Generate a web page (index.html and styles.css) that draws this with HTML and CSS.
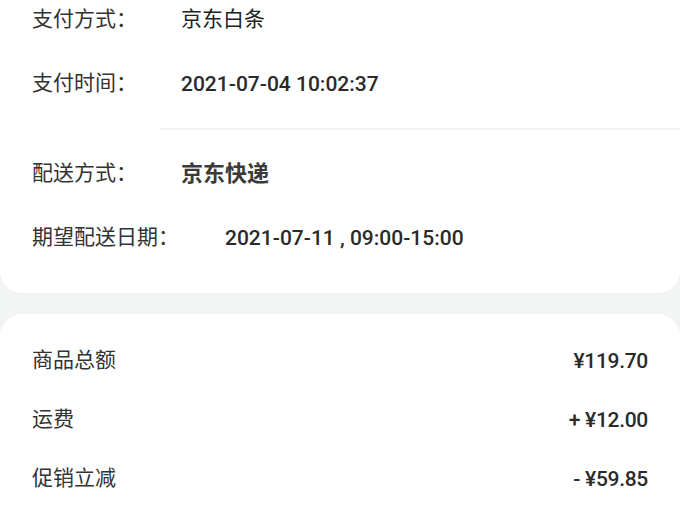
FILE: index.html
```html
<!DOCTYPE html>
<html lang="zh-CN">
<head>
    <meta charset="UTF-8">
    <meta name="viewport" content="width=device-width, initial-scale=1.0">
    <title>订单详情</title>
    <link rel="stylesheet" href="styles.css">
</head>
<body>
    <div class="card card-info">
        <div class="row">
            <span class="label">支付方式：</span>
            <span class="value">京东白条</span>
        </div>
        <div class="row">
            <span class="label">支付时间：</span>
            <span class="value num">2021-07-04 10:02:37</span>
        </div>

        <div class="divider"></div>

        <div class="row">
            <span class="label">配送方式：</span>
            <span class="value strong">京东快递</span>
        </div>
        <div class="row">
            <span class="label label-wide">期望配送日期：</span>
            <span class="value num">2021-07-11 , 09:00-15:00</span>
        </div>
    </div>

    <div class="card card-amount">
        <div class="row">
            <span class="label">商品总额</span>
            <span class="amount">¥119.70</span>
        </div>
        <div class="row">
            <span class="label">运费</span>
            <span class="amount">+ ¥12.00</span>
        </div>
        <div class="row">
            <span class="label">促销立减</span>
            <span class="amount">- ¥59.85</span>
        </div>
    </div>
</body>
</html>
```

FILE: styles.css
```css
:root {
    --page-bg: #f2f3f3;
    --card-bg: #fff;
    --text: #222;
    --text-soft: #333;
    --line: #f3f3f3;
}

body {
    margin: 0;
    background-color: var(--page-bg);
    font-family: "Noto Sans CJK SC", sans-serif;
    font-size: 21px;
    color: var(--text);
}

.card {
    background-color: var(--card-bg);
    padding: 0 32px;
    display: flex;
    flex-direction: column;
}

.card-info {
    border-radius: 0 0 22px 22px;
    padding-bottom: 35px;
    gap: 24px;
}

.card-amount {
    margin-top: 21px;
    border-radius: 22px 22px 0 0;
    padding-top: 27px;
    padding-bottom: 20px;
    gap: 19px;
}

.row {
    height: 40px;
    display: flex;
    align-items: center;
    line-height: 1;
}

/* CJK glyphs sit low in the line box, lift them a little */
.label,
.value {
    margin-bottom: 6px;
}

.label {
    width: 149px;
    flex-shrink: 0;
    color: var(--text-soft);
}

.label-wide {
    width: 193px;
}

.value.strong {
    font-weight: 700;
    color: #3a3a3a;
    font-size: 22px;
}

/* digits read better in Roboto, a touch heavier */
.num,
.amount {
    font-family: "Roboto", "Noto Sans CJK SC", sans-serif;
    font-weight: 500;
    font-size: 21px;
    color: #2a2a2a;
    margin-bottom: 0;
}

.amount {
    margin-left: auto;
    letter-spacing: -0.3px;
}

.divider {
    height: 2px;
    margin: 0 -32px 0 128px;
    background-color: var(--line);
}
```
